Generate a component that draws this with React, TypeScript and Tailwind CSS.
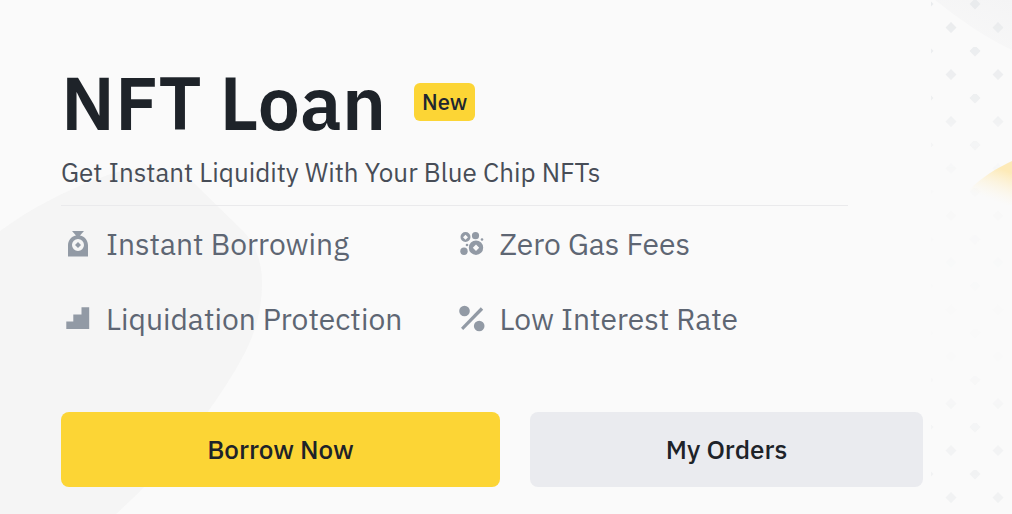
import type { ReactNode } from "react";

const MoneyBagIcon = () => (
  <svg viewBox="0 0 32 32" className="h-8 w-8" fill="currentColor" aria-hidden="true">
    <path
      fillRule="evenodd"
      d="M11 3h12l-4 4.500c5 1.200 8 5 8 10V28.500H7V17.500c0-5 3-8.800 8-10L11 3Zm6 8a6 6 0 1 0 0 12 6 6 0 0 0 0-12Z"
    />
    <path d="m17 14 3 3-3 3-3-3Z" />
  </svg>
);

const StairsIcon = () => (
  <svg viewBox="0 0 32 32" className="h-8 w-8" fill="currentColor" aria-hidden="true">
    <path d="M20.500 4.200H28.200V26H5.300v-7.500h7V11.500h8.200Z" />
  </svg>
);

const BubblesIcon = () => (
  <svg viewBox="0 0 32 32" className="h-8 w-8" fill="currentColor" aria-hidden="true">
    <path
      fillRule="evenodd"
      d="M10.500 4a5 5 0 1 0 0 10 5 5 0 0 0 0-10Zm0 2.700L13 9.200l-2.500 2.500L8 9.200Z"
    />
    <path
      fillRule="evenodd"
      d="M21 12.500a7.200 7.200 0 1 0 0 14.400 7.200 7.200 0 0 0 0-14.400Zm0 4 3.200 3.200-3.200 3.200-3.200-3.200Z"
    />
    <circle cx="20.500" cy="7.700" r="3.600" />
    <circle cx="9" cy="23.300" r="3.700" />
    <circle cx="27" cy="11.500" r="1.300" />
    <circle cx="12" cy="17" r="1.300" />
  </svg>
);

const PercentIcon = () => (
  <svg viewBox="0 0 32 32" className="h-8 w-8" fill="currentColor" aria-hidden="true">
    <circle cx="9.500" cy="8" r="5.300" />
    <circle cx="24.200" cy="23" r="5.300" />
    <path d="M25.800 4.300 28.200 6.700 8.200 27 6 24.700Z" />
  </svg>
);

const features: { label: string; icon: ReactNode }[] = [
  { label: "Instant Borrowing", icon: <MoneyBagIcon /> },
  { label: "Zero Gas Fees", icon: <BubblesIcon /> },
  { label: "Liquidation Protection", icon: <StairsIcon /> },
  { label: "Low Interest Rate", icon: <PercentIcon /> },
];

const Blob = () => (
  <svg
    viewBox="0 0 264 514"
    className="pointer-events-none absolute left-0 top-0 h-[514px] w-[264px]"
    aria-hidden="true"
  >
    <path
      fill="#f5f5f5"
      d="M0 231C30 209 65 190 108 175C140 164 174 166 194 183L244 232C257 247 262 264 262 282C262 325 248 355 207 413C188 440 160 474 116 514H0Z"
    />
  </svg>
);

const DotPattern = () => (
  <svg
    viewBox="0 0 81 514"
    className="pointer-events-none absolute right-0 top-0 h-[514px] w-[81px]"
    aria-hidden="true"
  >
    <defs>
      <pattern id="diamonds" width="47" height="47" patternUnits="userSpaceOnUse">
        <path fill="#e9ebed" d="m20 22 5.500 5.500L20 33l-5.500-5.500ZM44 -1.500l5.500 5.500L44 9.500 38.500 4ZM-3 -1.500 2.500 4-3 9.500-8.500 4Z" />
      </pattern>
      <linearGradient id="fade" x1="0" y1="0" x2="0" y2="1">
        <stop offset="0" stopColor="#fff" />
        <stop offset="0.200" stopColor="#fff" stopOpacity="0.700" />
        <stop offset="0.340" stopColor="#fff" stopOpacity="0.100" />
        <stop offset="0.700" stopColor="#fff" stopOpacity="0.050" />
        <stop offset="0.850" stopColor="#fff" stopOpacity="0.400" />
        <stop offset="1" stopColor="#fff" stopOpacity="0.600" />
      </linearGradient>
      <mask id="dotMask">
        <rect width="81" height="514" fill="url(#fade)" />
      </mask>
      <linearGradient id="corner" x1="1" y1="0" x2="0.300" y2="1">
        <stop offset="0" stopColor="#f4f4f5" />
        <stop offset="1" stopColor="#f8f8f8" />
      </linearGradient>
      <linearGradient id="glow" x1="0.800" y1="0.200" x2="0.550" y2="0.900">
        <stop offset="0" stopColor="#fdeab8" />
        <stop offset="1" stopColor="#fdf6e3" stopOpacity="0" />
      </linearGradient>
    </defs>
    <path fill="url(#corner)" d="M4 0H81V50C55 38 28 19 4 0Z" />
    <rect width="81" height="514" fill="url(#diamonds)" mask="url(#dotMask)" />
    <path fill="url(#glow)" d="M81 161C66 168 51 177 38 190L48 205H81Z" />
  </svg>
);

const App = () => {
  return (
    <main className="relative min-h-screen overflow-hidden bg-[#fafafa] font-['IBM_Plex_Sans','Noto_Sans',sans-serif] text-[#1e2329]">
      <Blob />
      <DotPattern />

      <div className="relative pb-7 pl-[61px] pr-[89px] pt-[62px]">
        <div className="flex items-center gap-7">
          <h1 className="text-[75px] font-semibold leading-[80px]">NFT Loan</h1>
          <span className="rounded-md bg-[#fcd535] px-2 text-[22px] font-medium leading-[38px] text-[#202630]">
            New
          </span>
        </div>
        <p className="mt-2.5 text-[26px] leading-10 text-[#474d57]">
          Get Instant Liquidity With Your Blue Chip NFTs
        </p>

        <ul className="mt-[13px] grid max-w-[787px] grid-cols-2 gap-y-[35px] border-t border-[#eaeaec] pt-[18px]">
          {features.map(({ label, icon }) => (
            <li key={label} className="flex items-center gap-[13px] whitespace-nowrap text-[30px] leading-10 text-[#5e6673]">
              <span className="shrink-0 text-[#929aa5]">{icon}</span>
              {label}
            </li>
          ))}
        </ul>

        <div className="mt-[73px] grid grid-cols-[439fr_393fr] gap-[30px] text-[26px] font-medium">
          <button type="button" className="h-[75px] rounded-lg bg-[#fcd535]">
            Borrow Now
          </button>
          <button type="button" className="h-[75px] rounded-lg bg-[#eaebef]">
            My Orders
          </button>
        </div>
      </div>
    </main>
  );
};

export default App;
